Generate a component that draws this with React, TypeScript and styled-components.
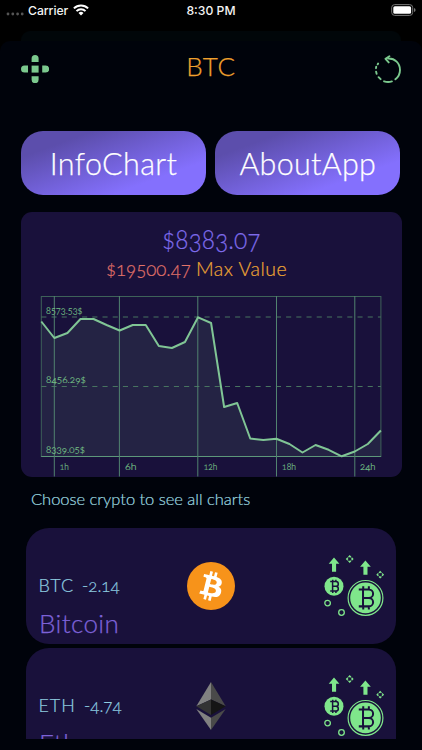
import React from "react";
import styled, { createGlobalStyle } from "styled-components";

const Global = createGlobalStyle`
  * { box-sizing: border-box; }
  body { margin: 0; background: #000; font-family: Lato, "Open Sans", sans-serif; font-weight: 300; font-variant-numeric: oldstyle-nums; }
  svg { display: block; flex: none; }
`;

const Screen = styled.div`
  width: 422px;
  height: 750px;
  overflow: hidden;
  display: flex;
  flex-direction: column;
  background: #000;
`;

const StatusBar = styled.div`
  height: 31px;
  flex: none;
  padding: 0 6px;
  display: grid;
  grid-template-columns: 1fr auto 1fr;
  align-items: start;
  color: #f4f4f4;
  font: 500 12.2px/21px Inter, sans-serif;
  font-variant-numeric: normal;
`;

const StatusSide = styled.div<{ $end?: boolean }>`
  height: 20px;
  display: flex;
  align-items: center;
  justify-content: ${(p) => (p.$end ? "flex-end" : "flex-start")};
`;

const Carrier = styled.span`
  margin: 0 5px 0 4px;
  letter-spacing: -0.05px;
`;

const SheetBehind = styled.div`
  height: 10px;
  flex: none;
  margin: 0 21px;
  border-radius: 9px 9px 0 0;
  background: #010609;
`;

const Sheet = styled.main`
  flex: 1;
  min-height: 0;
  padding: 0 21px 11px;
  border-radius: 10px 10px 0 0;
  background: #00030b;
  display: flex;
  flex-direction: column;
`;

const Header = styled.header`
  height: 90px;
  flex: none;
  padding-top: 9px;
  display: flex;
  justify-content: space-between;
`;

const HeaderIcon = styled.div`
  width: 28px;
  padding-top: 5px;
`;

const Title = styled.h1`
  margin: -1px 0 0;
  font-size: 26px;
  font-weight: 300;
  line-height: 34px;
  letter-spacing: 0.8px;
  color: #f0a12e;
  -webkit-text-stroke: 0.25px;
`;

const Buttons = styled.div`
  display: flex;
  gap: 9.3px;
  flex: none;
`;

const PillButton = styled.button<{ $tracking: string }>`
  width: 185px;
  height: 64px;
  padding: 0;
  border: 0;
  border-radius: 22px;
  background: linear-gradient(160deg, #5c4eac 20%, #8470fd 74%);
  color: #fff;
  font: 300 30.5px/64px Lato, sans-serif;
  letter-spacing: ${(p) => p.$tracking};
  -webkit-text-stroke: 0.25px;
`;

const ChartCard = styled.section`
  width: 380.5px;
  height: 264.5px;
  margin-top: 17px;
  flex: none;
  border-radius: 11px;
  background: #19113b;
  display: flex;
  flex-direction: column;
`;

const Price = styled.div`
  height: 44px;
  padding: 11px 0 0 0;
  text-align: center;
  font-size: 26.5px;
  line-height: 32px;
  color: #7e6bea;
  -webkit-text-stroke: 0.2px;
  transform: scaleX(0.925);
`;

const MaxLine = styled.div`
  height: 40px;
  display: flex;
  gap: 6px;
  padding-left: 84.5px;
  font-size: 19.5px;
  line-height: 26px;
  -webkit-text-stroke: 0.2px;
`;

const MaxPrice = styled.span`
  width: 84.5px;
  color: #e2736a;
  transform: scaleX(0.955);
  transform-origin: left;
`;

const MaxLabel = styled.span`
  color: #eda534;
  letter-spacing: 0.5px;
`;

const ChartLabel = styled.text`
  font-size: 10.3px;
  fill: #77c188;
  stroke: #77c188;
  stroke-width: 0.2px;
`;

const Caption = styled.p`
  margin: 0;
  height: 51.5px;
  flex: none;
  padding: 11px 0 0 10px;
  font-size: 16.5px;
  line-height: 22px;
  letter-spacing: -0.03px;
  color: #9edbe0;
  -webkit-text-stroke: 0.2px;
`;

const List = styled.div`
  flex: 1;
  min-height: 0;
  overflow: hidden;
  padding: 0 5px 0 4.5px;
  display: flex;
  flex-direction: column;
  gap: 4.5px;
`;

const CoinCard = styled.article`
  height: 115.5px;
  flex: none;
  padding-left: 13px;
  border-radius: 23px;
  background: #19113b;
  display: grid;
  grid-template-columns: 148.5px 137px auto;
`;

const CoinInfo = styled.div`
  padding-top: 45px;
`;

const CoinQuote = styled.div`
  display: flex;
  gap: 8px;
  font-size: 18px;
  line-height: 24px;
  color: #8fcde0;
  -webkit-text-stroke: 0.2px;
`;

const Symbol = styled.span`
  letter-spacing: 0.9px;
`;

const Change = styled.span`
  transform: scaleX(0.94);
  transform-origin: left;
`;

const CoinName = styled.div`
  margin-top: 9px;
  padding-left: 0.5px;
  font-size: 26px;
  line-height: 34px;
  letter-spacing: 0.4px;
  color: #7d62d8;
  -webkit-text-stroke: 0.25px;
`;

const CoinLogo = styled.div`
  padding-top: 34px;
`;

const Growth = styled.div`
  padding-top: 26px;
`;

const SignalIcon = () => (
  <svg width="18" height="20" viewBox="0 0 18 20" fill="#555">
    {[2, 6.8, 11.6, 16.2].map((x) => <circle key={x} cx={x} cy="14" r="1.4" />)}
  </svg>
);

const WifiIcon = () => (
  <svg width="16" height="12" viewBox="0 0 16 12" fill="none" stroke="#fff" strokeWidth="2">
    <path d="M.9 4.4a10 10 0 0 1 14.2 0M3.5 7.1a6.3 6.3 0 0 1 9 0" />
    <path d="M8 11.5 5.5 9a3.6 3.6 0 0 1 5 0Z" fill="#fff" stroke="none" />
  </svg>
);

const BatteryIcon = () => (
  <svg width="26" height="12" viewBox="0 0 26 12">
    <rect x="1.7" y=".6" width="21" height="10.8" rx="3" fill="none" stroke="#777" />
    <rect x="3.3" y="2.2" width="17.8" height="7.6" rx="1.6" fill="#fff" />
    <path d="M24 4q1.6.7 1.6 2T24 8z" fill="#777" />
  </svg>
);

const CrossIcon = () => (
  <svg width="28" height="28" viewBox="0 0 28 28" fill="#7bc98e">
    <rect x="10.6" y="10.6" width="7" height="7" />
    <path d="M10.6 7V3.5a3.5 3.5 0 0 1 7 0V7zM10.6 21.2v3.5a3.5 3.5 0 0 0 7 0v-3.5zM7 10.6H3.5a3.5 3.5 0 0 0 0 7H7zM21.2 10.6h3.5a3.5 3.5 0 0 1 0 7h-3.5z" />
  </svg>
);

const ReloadIcon = () => (
  <svg width="28" height="28" viewBox="0 0 28 28" fill="none" stroke="#7bc98e" strokeWidth="1.9" strokeLinecap="round" strokeLinejoin="round">
    <path d="M15.2 3.5C22 3.2 27 8.4 27 15c0 3.8-1.7 7-4.6 9.3M18.9 26.4a13 13 0 0 1-7.8-.1M7.6 24.2l-2-2M3.6 18.8l-.5-2.2M3 13.2l.2-1.4M4.7 9.3l.4-.8M16.4 1.2l-3.9 2.6 3.2 3.6" />
  </svg>
);

const values = [
  321.5, 338, 333, 319, 319, 325, 330.5, 325, 325, 346, 348, 342, 317.3, 323,
  407, 403, 438.5, 440, 438.7, 444, 452.5, 445, 449.8, 456.3, 451.5, 444, 430.5,
].map((y) => y - 296);

const hours = [
  { x: 33.3, label: "1h", tx: 38.8, width: 9 },
  { x: 98.4, label: "6h", tx: 104, width: 11.5 },
  { x: 176.8, label: "12h", tx: 182.8, width: 13.5 },
  { x: 255.5, label: "18h", tx: 261, width: 14 },
  { x: 333.8, label: "24h", tx: 339, width: 15.5 },
];

const levels = [
  { y: 17.5, label: "8573.53$", width: 36.5 },
  { y: 87, label: "8456.29$", width: 40 },
  { y: 157, label: "8339.05$", width: 39 },
];

const PriceChart = () => {
  const line = values.map((y, i) => `${20.3 + i * 13.06},${y}`).join(" ");
  return (
    <svg width="380" height="180.5" viewBox="0 0 380 180.5" fill="none">
      <polygon points={`20.3,160.5 ${line} 359.9,160.5`} fill="#242344" />
      <rect x="20.3" y=".5" width="339.6" height="160" stroke="#3e6259" />
      <path d="M20.3 160.5H359.9" stroke="#5d987a" />
      <path d="M20.3 21H359.9M20.3 90.5H359.9" stroke="#487460" strokeDasharray="5.1 5.1" strokeWidth="1.2" />
      {hours.map((h) => <path key={h.label} d={`M${h.x} 0V180.5`} stroke="#528370" />)}
      <polyline points={line} stroke="#80c595" strokeWidth="2" strokeLinejoin="round" />
      {levels.map((l) => <ChartLabel key={l.label} x="25" y={l.y} textLength={l.width} lengthAdjust="spacingAndGlyphs">{l.label}</ChartLabel>)}
      {hours.map((h) => <ChartLabel key={h.label} x={h.tx} y="174.3" textLength={h.width} lengthAdjust="spacingAndGlyphs">{h.label}</ChartLabel>)}
    </svg>
  );
};

const BitcoinLogo = () => (
  <svg width="48" height="48" viewBox="0 0 32 32">
    <circle cx="16" cy="16" r="16" fill="#f7931a" />
    <path fill="#fff" fillRule="evenodd" d="M23.189 14.02c.314-2.096-1.283-3.223-3.465-3.975l.708-2.84-1.728-.43-.69 2.765c-.454-.114-.92-.22-1.385-.326l.695-2.783L15.596 6l-.708 2.839c-.376-.086-.746-.17-1.104-.26l.002-.009-2.384-.595-.46 1.846s1.283.294 1.256.312c.7.175.826.638.805 1.006l-.806 3.235c.048.012.11.03.18.057l-.183-.045-1.13 4.532c-.086.212-.303.531-.793.41.018.025-1.256-.313-1.256-.313l-.858 1.978 2.25.561c.418.105.828.215 1.231.318l-.715 2.872 1.727.43.708-2.84c.472.127.93.245 1.378.357l-.706 2.828 1.728.43.715-2.866c2.948.558 5.164.333 6.097-2.333.752-2.146-.037-3.385-1.588-4.192 1.13-.26 1.98-1.003 2.207-2.538zm-3.95 5.538c-.533 2.147-4.148.986-5.32.695l.95-3.805c1.172.293 4.929.872 4.37 3.11zm.535-5.569c-.487 1.953-3.495.96-4.47.717l.86-3.45c.975.243 4.118.696 3.61 2.733z" />
  </svg>
);

const EthereumLogo = () => (
  <svg width="48" height="48" viewBox="0 0 48 48">
    <path d="M24 0v17.5L9.3 24.2z" fill="#818181" />
    <path d="M24 0v17.5l14.7 6.7z" fill="#4a4a4a" />
    <path d="M9.3 24.2 24 17.5v15.4z" fill="#333" />
    <path d="M38.7 24.2 24 17.5v15.4z" fill="#151515" />
    <path d="M9.3 27 24 35.8V48z" fill="#818181" />
    <path d="M38.7 27 24 35.8V48z" fill="#4a4a4a" />
  </svg>
);

const CoinMark = ({ weight = 1.9 }: { weight?: number }) => (
  <path d="M-7-8H2.5a4 4 0 0 1 0 8H-3M2.5 0a4 4 0 0 1 0 8H-7M-3-8V8M-2.8-8v-3M2.5-8v-3M-2.8 8v3M2.5 8v3" fill="none" stroke="#19113b" strokeWidth={weight} />
);

const Spark = ({ x, y }: { x: number; y: number }) => (
  <path transform={`translate(${x} ${y})`} d="M-1.2-1.8 0-3 1.2-1.8M-1.2 1.8 0 3 1.2 1.8M-1.8-1.2-3 0-1.8 1.2M1.8-1.2 3 0 1.8 1.2" fill="none" stroke="#7fe68b" strokeWidth="1.3" />
);

const GrowthIcon = () => (
  <svg width="62" height="64" viewBox="0 0 62 64" fill="#7fe68b">
    <path d="M10 3.5 4.7 9.8H8v7.9h4.1V9.8h3.3zM41.4 6.5l-5.3 6.3h3.3v7.9h4.1v-7.9h3.3z" />
    <Spark x={25.7} y={5} />
    <Spark x={56.2} y={20.7} />
    <circle cx="10" cy="32.3" r="9.5" />
    <g transform="translate(10.4 32.3) scale(.6)"><CoinMark weight={2.5} /></g>
    <circle cx="41.5" cy="43.9" r="17.4" fill="none" stroke="#7fe68b" strokeWidth="1.2" />
    <circle cx="41.5" cy="43.9" r="15.3" />
    <g transform="translate(42.2 43.9) scale(1.06)"><CoinMark /></g>
    <g fill="none" stroke="#7fe68b" strokeWidth="1.3">
      <circle cx="3.6" cy="49.1" r="2.8" />
      <circle cx="17.5" cy="58.5" r="2.8" />
    </g>
  </svg>
);

const coins = [
  { symbol: "BTC", change: "-2.14", name: "Bitcoin", Logo: BitcoinLogo },
  { symbol: "ETH", change: "-4.74", name: "Ethereum", Logo: EthereumLogo },
];

export default function App() {
  return (
    <Screen>
      <Global />
      <StatusBar>
        <StatusSide><SignalIcon /><Carrier>Carrier</Carrier><WifiIcon /></StatusSide>
        <span>8:30 PM</span>
        <StatusSide $end><BatteryIcon /></StatusSide>
      </StatusBar>
      <SheetBehind />
      <Sheet>
        <Header>
          <HeaderIcon><CrossIcon /></HeaderIcon>
          <Title>BTC</Title>
          <HeaderIcon><ReloadIcon /></HeaderIcon>
        </Header>
        <Buttons>
          <PillButton $tracking="0.35px">InfoChart</PillButton>
          <PillButton $tracking="0.3px">AboutApp</PillButton>
        </Buttons>
        <ChartCard>
          <Price>$8383.07</Price>
          <MaxLine><MaxPrice>$19500.47</MaxPrice><MaxLabel>Max Value</MaxLabel></MaxLine>
          <PriceChart />
        </ChartCard>
        <Caption>Choose crypto to see all charts</Caption>
        <List>
          {coins.map(({ symbol, change, name, Logo }) => (
            <CoinCard key={symbol}>
              <CoinInfo>
                <CoinQuote><Symbol>{symbol}</Symbol><Change>{change}</Change></CoinQuote>
                <CoinName>{name}</CoinName>
              </CoinInfo>
              <CoinLogo><Logo /></CoinLogo>
              <Growth><GrowthIcon /></Growth>
            </CoinCard>
          ))}
        </List>
      </Sheet>
    </Screen>
  );
}
